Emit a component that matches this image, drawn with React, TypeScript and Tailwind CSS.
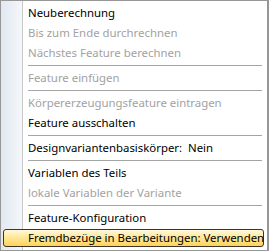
type Item = { label: string; disabled?: boolean; sep?: boolean; active?: boolean };

const items: Item[] = [
  { label: "Neuberechnung" },
  { label: "Bis zum Ende durchrechnen", disabled: true },
  { label: "Nächstes Feature berechnen", disabled: true },
  { label: "", sep: true },
  { label: "Feature einfügen", disabled: true },
  { label: "", sep: true },
  { label: "Körpererzeugungsfeature eintragen", disabled: true },
  { label: "Feature ausschalten" },
  { label: "", sep: true },
  { label: "Designvariantenbasiskörper:  Nein" },
  { label: "", sep: true },
  { label: "Variablen des Teils" },
  { label: "lokale Variablen der Variante", disabled: true },
  { label: "", sep: true },
  { label: "Feature-Konfiguration" },
  { label: "Fremdbezüge in Bearbeitungen: Verwenden", active: true },
];

export default function App() {
  return (
    <div
      className="w-[269px] h-[251px] border border-[#979797] border-r-[2px] py-[2px] px-[2px] bg-[linear-gradient(to_right,#e2e8f1_0px,#f4f7fb_21px,#c8c8c8_21px,#c8c8c8_22px,#ffffff_22px)] text-[11.4px] leading-[20px]"
      style={{ fontFamily: '"Noto Sans", "Open Sans", sans-serif' }}
    >
      {items.map((it, i) => {
        if (it.sep) {
          return (
            <div key={i} className="h-[5px] pt-[2px] pl-[25px] pr-[3px]">
              <div className="h-px bg-[#a5a5a5]" />
            </div>
          );
        }
        if (it.active) {
          return (
            <div key={i} className="h-[20px] py-px pr-[1px]">
              <div className="h-[18px] rounded-[3px] border border-[#3d3624] bg-[linear-gradient(to_bottom,#fff8dc,#ffe89a_45%,#ffd35a)] pl-[24px] leading-[16px] text-black whitespace-pre">
                {it.label}
              </div>
            </div>
          );
        }
        return (
          <div
            key={i}
            className={`h-[20px] pl-[25px] whitespace-pre ${it.disabled ? "text-[#a2a2a2]" : "text-black"}`}
          >
            {it.label}
          </div>
        );
      })}
    </div>
  );
}
